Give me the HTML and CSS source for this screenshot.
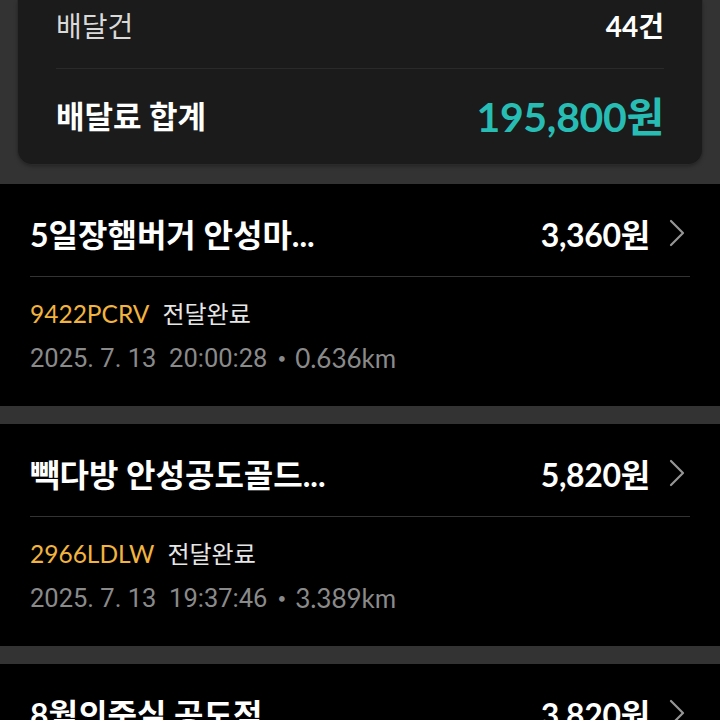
FILE: index.html
```html
<!DOCTYPE html>
<html lang="ko">
<head>
<meta charset="utf-8">
<link rel="stylesheet" href="styles.css">
</head>
<body>
<section class="summary">
  <div class="sum-row first">
    <span class="sum-label">배달건</span>
    <span class="sum-value">44건</span>
  </div>
  <div class="sum-divider"></div>
  <div class="sum-row total">
    <span class="total-label">배달료 합계</span>
    <span class="total-value">195,800원</span>
  </div>
</section>

<article class="item">
  <div class="item-head">
    <span class="item-title">5일장햄버거 안성마...</span>
    <span class="item-price">3,360원</span>
    <svg class="chev" width="18" height="28" viewBox="0 0 18 28"><path d="M3 2 L15 14 L3 26" fill="none" stroke="#959595" stroke-width="2.2" stroke-linecap="round" stroke-linejoin="round"/></svg>
  </div>
  <div class="item-divider"></div>
  <div class="item-code"><span class="code">9422PCRV</span><span class="status">전달완료</span></div>
  <div class="item-meta"><span class="date">2025. 7. 13&nbsp;&nbsp;20:00:28</span><span class="dot">•</span><span class="dist">0.636km</span></div>
</article>

<article class="item">
  <div class="item-head">
    <span class="item-title">빽다방 안성공도골드...</span>
    <span class="item-price">5,820원</span>
    <svg class="chev" width="18" height="28" viewBox="0 0 18 28"><path d="M3 2 L15 14 L3 26" fill="none" stroke="#959595" stroke-width="2.2" stroke-linecap="round" stroke-linejoin="round"/></svg>
  </div>
  <div class="item-divider"></div>
  <div class="item-code"><span class="code">2966LDLW</span><span class="status">전달완료</span></div>
  <div class="item-meta"><span class="date">2025. 7. 13&nbsp;&nbsp;19:37:46</span><span class="dot">•</span><span class="dist">3.389km</span></div>
</article>

<article class="item">
  <div class="item-head">
    <span class="item-title">8월의죽실 공도점</span>
    <span class="item-price">3,820원</span>
    <svg class="chev" width="18" height="28" viewBox="0 0 18 28"><path d="M3 2 L15 14 L3 26" fill="none" stroke="#959595" stroke-width="2.2" stroke-linecap="round" stroke-linejoin="round"/></svg>
  </div>
</article>
</body>
</html>
```
FILE: styles.css
```css
* { box-sizing: border-box; }
html, body { margin: 0; padding: 0; }
body {
  background: #333333;
  font-family: Lato, "Noto Sans CJK KR", sans-serif;
  color: #ffffff;
  width: 720px;
  height: 720px;
  overflow: hidden;
}
.summary {
  margin: 0 18px 20px;
  background: #1b1b1b;
  border-radius: 0 0 14px 14px;
  padding: 0 38px;
  box-shadow: 0 0 0 1px #2a2a2a, 0 2px 4px rgba(0,0,0,0.35);
}
.sum-row {
  display: flex;
  align-items: center;
  justify-content: space-between;
}
.sum-row.first { height: 50px; }
.sum-divider { height: 1px; background: #2a2a2a; margin-top: 18px; }
.sum-row.total { height: 95px; padding-bottom: 5px; }
.sum-label { font-size: 28px; color: #d9d9d9; }
.sum-value { font-size: 28px; font-weight: 700; color: #ffffff; }
.total-label { font-size: 31px; font-weight: 700; color: #ffffff; }
.total-value { font-size: 41px; font-weight: 700; color: #27bdb4; letter-spacing: -0.3px; }

.item {
  background: #000000;
  height: 222px;
  margin-bottom: 18px;
  padding: 0 30px;
}
.item-head {
  height: 92px;
  padding-top: 6px;
  display: flex;
  align-items: center;
}
.item-title { font-size: 32px; font-weight: 700; flex: 1; white-space: nowrap; }
.item-price { font-size: 32px; font-weight: 700; letter-spacing: -0.3px; }
.chev { margin-left: 18px; margin-right: 4px; }
.item-divider { height: 1px; background: #333333; }
.item-code {
  margin-top: 22px;
  line-height: 30px;
  font-size: 24.5px;
  display: flex;
  gap: 13px;
}
.code { color: #f2b43e; }
.status { color: #e6e6e6; font-size: 24px; }
.item-meta {
  margin-top: 14px;
  line-height: 30px;
  font-size: 25.5px;
  color: #8a8a8a;
  display: flex;
  align-items: center;
}
.date { font-family: Roboto, "Noto Sans CJK KR", sans-serif; font-size: 25.5px; }
.dot { font-size: 15px; margin: 0 9px 0 10px; }
.dist { font-size: 26px; }
```
